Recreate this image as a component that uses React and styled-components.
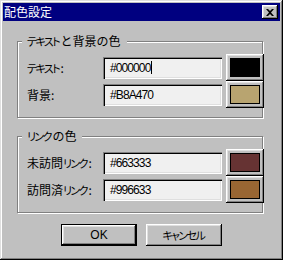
import React from "react";
import styled, { createGlobalStyle } from "styled-components";

const GlobalStyle = createGlobalStyle`
  html, body {
    margin: 0;
    padding: 0;
    background: #c0c0c0;
  }
  * {
    box-sizing: border-box;
  }
`;

const groups = [
  {
    title: "テキストと背景の色",
    rows: [
      { label: "テキスト:", value: "#000000", focused: true },
      { label: "背景:", value: "#B8A470" },
    ],
  },
  {
    title: "リンクの色",
    rows: [
      { label: "未訪問リンク:", value: "#663333" },
      { label: "訪問済リンク:", value: "#996633" },
    ],
  },
];

// katakana runs get narrower, like the bitmap UI font of the original
const jpText = (s) =>
  s.split(/([ァ-ヶー]+)/).map((part, i) =>
    /^[ァ-ヶー]+$/.test(part) ? <Kana key={i}>{part}</Kana> : part
  );

export default function App() {
  return (
    <>
      <GlobalStyle />
      <Window>
        <TitleBar>
          <Title>配色設定</Title>
          <CloseButton>
            <svg width="8" height="7" viewBox="0 0 8 7">
              <path d="M0 0h2l2 2 2-2h2L5 3.5 8 7H6L4 5 2 7H0l3-3.5z" fill="#000" />
            </svg>
          </CloseButton>
        </TitleBar>
        <Body>
          {groups.map((g, i) => (
            <Group key={g.title} $first={i === 0}>
              <Legend>{jpText(g.title)}</Legend>
              <Rows>
                {g.rows.map((r) => (
                  <React.Fragment key={r.label}>
                    <Label>{jpText(r.label)}</Label>
                    <TextBox>
                      {r.value}
                      {r.focused && <Caret />}
                    </TextBox>
                    <ColorButton>
                      <Swatch $color={r.value} />
                    </ColorButton>
                  </React.Fragment>
                ))}
              </Rows>
            </Group>
          ))}
          <ButtonRow>
            <DialogButton $default>OK</DialogButton>
            <DialogButton>{jpText("キャンセル")}</DialogButton>
          </ButtonRow>
        </Body>
      </Window>
    </>
  );
}

const jp = `"Noto Sans CJK JP", "Noto Sans", sans-serif`;

const Window = styled.div`
  width: 283px;
  height: 260px;
  padding: 3px;
  background: #c0c0c0;
  display: flex;
  flex-direction: column;
  box-shadow: inset -1px -1px #000, inset 1px 1px #dfdfdf, inset -2px -2px #808080,
    inset 2px 2px #fff;
  font-family: ${jp};
`;

const Kana = styled.span`
  font-size: 11px;
  letter-spacing: -1.6px;
  font-feature-settings: "palt" 1;
  margin-right: 1.6px;
`;

const TitleBar = styled.div`
  height: 18px;
  background: #000080;
  display: flex;
  align-items: center;
  justify-content: space-between;
  padding: 0 2px 0 1px;
`;

const Title = styled.span`
  color: #fff;
  font-size: 12px;
  line-height: 14px;
`;

const CloseButton = styled.div`
  width: 16px;
  height: 14px;
  background: #c0c0c0;
  display: flex;
  align-items: center;
  justify-content: center;
  box-shadow: inset -1px -1px #000, inset 1px 1px #fff, inset -2px -2px #808080,
    inset 2px 2px #dfdfdf;
`;

const Body = styled.div`
  display: flex;
  flex-direction: column;
  padding-left: 14px;
`;

const Group = styled.div`
  position: relative;
  width: 246px;
  margin-top: ${(p) => (p.$first ? "20px" : "18px")};
  padding: 12px 2px 9px 9px;
  border: 1px solid #808080;
  box-shadow: inset 1px 1px #fff, 1px 1px #fff;
`;

const Legend = styled.span`
  position: absolute;
  left: 4px;
  top: -8px;
  padding: 0 6px 0 5px;
  background: #c0c0c0;
  font-size: 12px;
  line-height: 14px;
  color: #000;
  white-space: nowrap;
`;

const Rows = styled.div`
  display: grid;
  grid-template-columns: 72px 119px 38px;
  grid-auto-rows: 27px;
  column-gap: 4px;
  align-items: center;
`;

const Label = styled.span`
  font-size: 12px;
  line-height: 14px;
  color: #000;
  white-space: nowrap;
`;

const TextBox = styled.div`
  height: 22px;
  display: flex;
  align-items: center;
  padding-left: 7px;
  background: #f0f0f0;
  font-family: "Liberation Sans", Arial, sans-serif;
  font-size: 12px;
  letter-spacing: -0.9px;
  color: #000;
  box-shadow: inset 1px 1px #808080, inset 2px 2px #000, inset -1px -1px #fff,
    inset -2px -2px #dfdfdf;
`;

const Caret = styled.span`
  display: inline-block;
  width: 1px;
  height: 13px;
  margin-left: 1px;
  background: #000;
`;

const ColorButton = styled.div`
  width: 38px;
  height: 27px;
  display: flex;
  align-items: center;
  justify-content: center;
  background: #c0c0c0;
  box-shadow: inset -1px -1px #000, inset 1px 1px #fff, inset -2px -2px #808080,
    inset 2px 2px #dfdfdf;
`;

const Swatch = styled.div`
  width: 30px;
  height: 19px;
  border: 1px solid #000;
  background: ${(p) => p.$color};
`;

const ButtonRow = styled.div`
  display: flex;
  justify-content: center;
  gap: 9px;
  margin: 11px 14px 0 0;
`;

const DialogButton = styled.div`
  width: 76px;
  height: 22px;
  display: flex;
  align-items: center;
  justify-content: center;
  background: #c0c0c0;
  font-family: "Liberation Sans", ${jp};
  font-size: 12px;
  color: #000;
  border: ${(p) => (p.$default ? "1px solid #000" : "none")};
  box-shadow: inset -1px -1px #000, inset 1px 1px #fff, inset -2px -2px #808080,
    inset 2px 2px #dfdfdf;
`;
